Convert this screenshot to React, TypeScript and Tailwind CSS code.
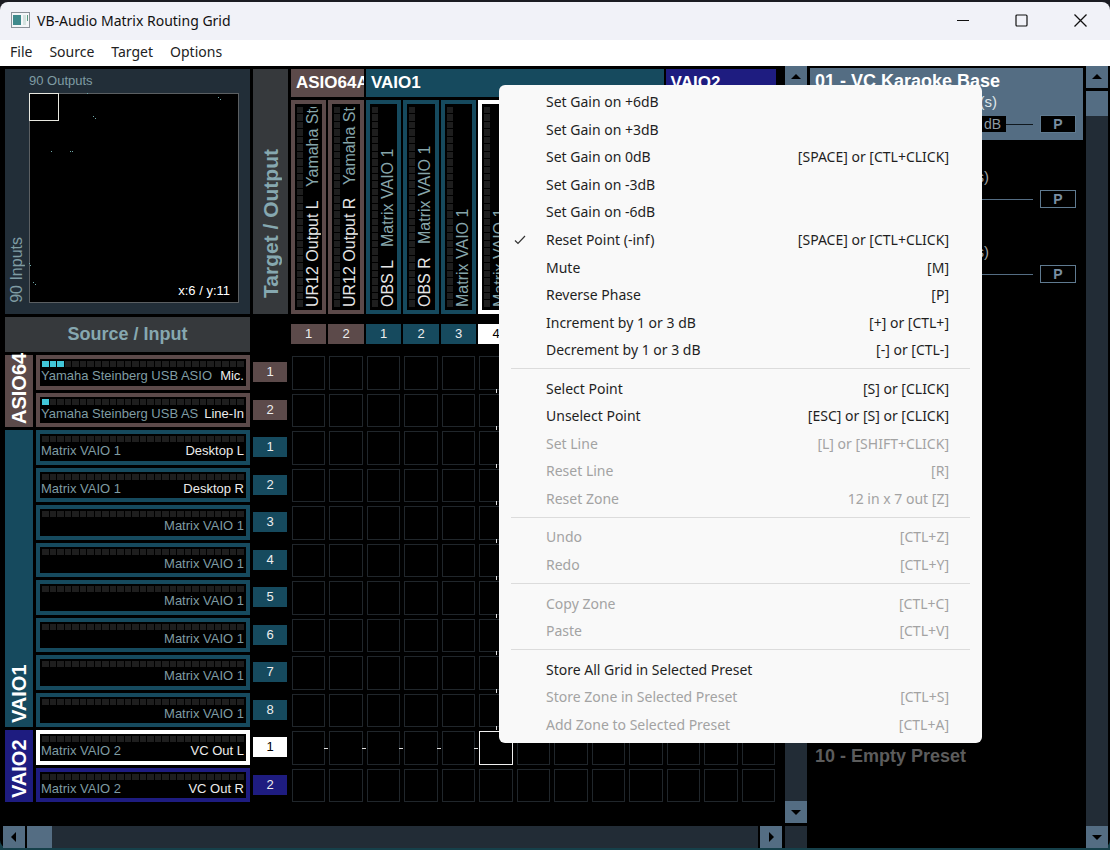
import clsx from 'clsx'

type Tone = 'asio' | 'vaio1' | 'vaio2' | 'active'

type Channel = {
  number: number
  tone: Tone
  device?: string
  name?: string
  level?: number
}

type MenuEntry = {
  label: string
  shortcut?: string
  checked?: boolean
  disabled?: boolean
}

type Preset = {
  slot: number
  title?: string
  zone?: string
  gain?: string
  selected?: boolean
}

const toneBg: Record<Tone, string> = {
  asio: 'bg-[#5c4a4a]',
  vaio1: 'bg-[#164a5e]',
  vaio2: 'bg-[#1e1c80]',
  active: 'bg-white',
}

const toneBorder: Record<Tone, string> = {
  asio: 'border-[#5c4a4a]',
  vaio1: 'border-[#164a5e]',
  vaio2: 'border-[#1e1c80]',
  active: 'border-white',
}

const outputs: Channel[] = [
  { number: 1, tone: 'asio', device: 'Yamaha Ste', name: 'UR12 Output L' },
  { number: 2, tone: 'asio', device: 'Yamaha Ste', name: 'UR12 Output R' },
  { number: 1, tone: 'vaio1', device: 'Matrix VAIO 1', name: 'OBS L' },
  { number: 2, tone: 'vaio1', device: 'Matrix VAIO 1', name: 'OBS R' },
  { number: 3, tone: 'vaio1', device: 'Matrix VAIO 1' },
  { number: 4, tone: 'active', device: 'Matrix VAIO 1' },
  { number: 5, tone: 'vaio1' },
  { number: 6, tone: 'vaio1' },
  { number: 7, tone: 'vaio1' },
  { number: 8, tone: 'vaio1' },
  { number: 1, tone: 'vaio2' },
  { number: 2, tone: 'vaio2' },
  { number: 3, tone: 'vaio2' },
]

const inputs: Channel[] = [
  { number: 1, tone: 'asio', device: 'Yamaha Steinberg USB ASIO', name: 'Mic.', level: 3 },
  { number: 2, tone: 'asio', device: 'Yamaha Steinberg USB AS', name: 'Line-In', level: 1 },
  { number: 1, tone: 'vaio1', device: 'Matrix VAIO 1', name: 'Desktop L' },
  { number: 2, tone: 'vaio1', device: 'Matrix VAIO 1', name: 'Desktop R' },
  { number: 3, tone: 'vaio1', device: 'Matrix VAIO 1' },
  { number: 4, tone: 'vaio1', device: 'Matrix VAIO 1' },
  { number: 5, tone: 'vaio1', device: 'Matrix VAIO 1' },
  { number: 6, tone: 'vaio1', device: 'Matrix VAIO 1' },
  { number: 7, tone: 'vaio1', device: 'Matrix VAIO 1' },
  { number: 8, tone: 'vaio1', device: 'Matrix VAIO 1' },
  { number: 1, tone: 'active', device: 'Matrix VAIO 2', name: 'VC Out L' },
  { number: 2, tone: 'vaio2', device: 'Matrix VAIO 2', name: 'VC Out R' },
]

const selectedRow = 10
const selectedColumn = 5

const menuGroups: MenuEntry[][] = [
  [
    { label: 'Set Gain on +6dB' },
    { label: 'Set Gain on +3dB' },
    { label: 'Set Gain on 0dB', shortcut: '[SPACE] or [CTL+CLICK]' },
    { label: 'Set Gain on -3dB' },
    { label: 'Set Gain on -6dB' },
    { label: 'Reset Point (-inf)', shortcut: '[SPACE] or [CTL+CLICK]', checked: true },
    { label: 'Mute', shortcut: '[M]' },
    { label: 'Reverse Phase', shortcut: '[P]' },
    { label: 'Increment by 1 or 3 dB', shortcut: '[+] or [CTL+]' },
    { label: 'Decrement by 1 or 3 dB', shortcut: '[-] or [CTL-]' },
  ],
  [
    { label: 'Select Point', shortcut: '[S] or [CLICK]' },
    { label: 'Unselect Point', shortcut: '[ESC] or [S] or [CLICK]' },
    { label: 'Set Line', shortcut: '[L] or [SHIFT+CLICK]', disabled: true },
    { label: 'Reset Line', shortcut: '[R]', disabled: true },
    { label: 'Reset Zone', shortcut: '12 in x 7 out [Z]', disabled: true },
  ],
  [
    { label: 'Undo', shortcut: '[CTL+Z]', disabled: true },
    { label: 'Redo', shortcut: '[CTL+Y]', disabled: true },
  ],
  [
    { label: 'Copy Zone', shortcut: '[CTL+C]', disabled: true },
    { label: 'Paste', shortcut: '[CTL+V]', disabled: true },
  ],
  [
    { label: 'Store All Grid in Selected Preset' },
    { label: 'Store Zone in Selected Preset', shortcut: '[CTL+S]', disabled: true },
    { label: 'Add Zone to Selected Preset', shortcut: '[CTL+A]', disabled: true },
  ],
]

const presets: Preset[] = [
  { slot: 1, title: '01 - VC Karaoke Base', zone: '(s)', gain: 'dB', selected: true },
  { slot: 2, zone: '(s)' },
  { slot: 3, zone: '(s)' },
  { slot: 4 },
  { slot: 5 },
  { slot: 6 },
  { slot: 7 },
  { slot: 8 },
  { slot: 9 },
  { slot: 10, title: '10 - Empty Preset' },
]

// Routed points on the overview map
const mapPoints = [
  [58, 0], [64, 23], [66, 25], [22, 58], [41, 58], [43, 58],
  [189, 4], [191, 6], [0, 170], [1, 172], [4, 189], [6, 191],
]

function TitleBar() {
  return (
    <header className="flex h-[38px] shrink-0 items-center rounded-t-lg bg-[#f1f2f8] pb-[2px] pl-[11px]">
      <svg width="19" height="16" viewBox="0 0 19 16" aria-hidden="true">
        <rect x="0.5" y="0.5" width="18" height="15" fill="#f4f6f8" stroke="#8b9299" />
        <rect x="2" y="3" width="8" height="10" fill="#3f8a8c" />
        <rect x="12" y="3" width="3" height="10" fill="#d5e3e0" />
        <rect x="16" y="3" width="1" height="6" fill="#5a9a80" />
      </svg>
      <h1 className="ml-[7px] flex-1 font-['Noto_Sans','Open_Sans',sans-serif] text-[14px] text-[#111]">
        VB-Audio Matrix Routing Grid
      </h1>
      <div className="flex h-full">
        <button aria-label="Minimize" className="flex w-[58px] items-center justify-center">
          <svg width="13" height="13" fill="none" stroke="#111"><path d="M0 6.5h12" /></svg>
        </button>
        <button aria-label="Maximize" className="flex w-[58px] items-center justify-center">
          <svg width="13" height="13" fill="none" stroke="#111" strokeWidth="1.2"><rect x="1" y="1" width="11" height="11" rx="1" /></svg>
        </button>
        <button aria-label="Close" className="flex w-[60px] items-center justify-center">
          <svg width="13" height="13" fill="none" stroke="#111" strokeWidth="1.3"><path d="M.5.5l12 12M12.5.5l-12 12" /></svg>
        </button>
      </div>
    </header>
  )
}

function MenuBar() {
  return (
    <nav className="flex h-[26px] shrink-0 items-center gap-[17px] bg-white px-[10px] pb-[3px] font-['Noto_Sans','Open_Sans',sans-serif] text-[14px] text-[#222]">
      {['File', 'Source', 'Target', 'Options'].map((item) => (
        <button key={item}>{item}</button>
      ))}
    </nav>
  )
}

function Leds({ lit = 0, vertical }: { lit?: number; vertical?: boolean }) {
  return (
    <div className={clsx('flex gap-px', vertical ? 'w-[6px] flex-col' : 'h-[6px]')}>
      {Array.from({ length: 27 }, (_, i) => (
        <span key={i} className={clsx('flex-1', i < lit ? 'bg-[#41c6d8]' : 'bg-[#1e1e1e]')} />
      ))}
    </div>
  )
}

function Overview() {
  return (
    <section className="flex bg-[#222e38] pr-[11px] pb-[11px]">
      <div className="flex w-6 items-end">
        <span className="rotate-180 text-[16px] leading-6 text-[#7f9ca3] [writing-mode:vertical-rl]">90 Inputs</span>
      </div>
      <div className="flex flex-1 flex-col">
        <span className="text-[13px] leading-6 text-[#7f9ca3]">90 Outputs</span>
        <div className="relative flex flex-1 items-end justify-end border border-[#5b5f62] bg-black px-2 py-[2px]">
          <svg className="absolute -top-px -left-px" width="210" height="210" shapeRendering="crispEdges" aria-hidden="true">
            {mapPoints.map(([x, y]) => (
              <rect key={`${x}-${y}`} x={x} y={y} width="1" height="1" fill="#6fa8a8" />
            ))}
            <rect x="0.5" y="0.5" width="29" height="27" fill="none" stroke="#e8e8e0" />
          </svg>
          <span className="text-[13px] leading-[18px] text-white">x:6 / y:11</span>
        </div>
      </div>
    </section>
  )
}

function OutputStrip({ channel }: { channel: Channel }) {
  return (
    <div className={clsx('flex min-w-0 gap-px overflow-hidden border-4 bg-black py-[3px] pl-[2px]', toneBorder[channel.tone])}>
      <Leds vertical />
      <div className="flex h-[200px] rotate-180 gap-[13px] overflow-hidden text-[16px] leading-[18px] whitespace-nowrap [writing-mode:vertical-rl]">
        {channel.name && <span className="text-[#e6e6e6]">{channel.name}</span>}
        {channel.device && <span className="text-[#86a5aa]">{channel.device}</span>}
      </div>
    </div>
  )
}

function InputStrip({ channel }: { channel: Channel }) {
  return (
    <div className={clsx('flex min-w-0 flex-col border-4 bg-black', toneBorder[channel.tone])}>
      <div className="px-[2px] pt-[2px]">
        <Leds lit={channel.level} />
      </div>
      <div
        className={clsx(
          'flex pr-[2px] pl-px text-[13px] leading-[18px] whitespace-nowrap',
          channel.name ? 'justify-between' : 'justify-end',
        )}
      >
        <span className="text-[#7f9ca3]">{channel.device}</span>
        {channel.name && <span className="text-[#ececec]">{channel.name}</span>}
      </div>
    </div>
  )
}

function ChannelNumber({ channel }: { channel: Channel }) {
  return (
    <button
      className={clsx('h-5 w-full text-[13px] leading-5', toneBg[channel.tone], channel.tone === 'active' ? 'text-black' : 'text-[#eee]')}
    >
      {channel.number}
    </button>
  )
}

function MatrixCells() {
  return (
    <div className="grid grid-cols-13 grid-rows-12 gap-x-[2px] gap-y-[3px]">
      {inputs.map((_, row) =>
        outputs.map((_, column) => {
          const selected = row === selectedRow && column === selectedColumn
          return (
            <button
              key={`${row}-${column}`}
              aria-label={`Input ${row + 1} to output ${column + 1}`}
              className={clsx('relative mx-px mt-px border', selected ? 'border-[#f0f0f0]' : 'border-[#20262b]')}
            >
              {row === selectedRow && column < selectedColumn && (
                <span className="absolute top-1/2 left-full h-px w-1 bg-[#ddd]" />
              )}
              {column === selectedColumn && row < selectedRow && (
                <span className="absolute top-full left-1/2 h-1 w-px bg-[#ddd]" />
              )}
            </button>
          )
        }),
      )}
    </div>
  )
}

function Matrix() {
  return (
    <div className="grid min-h-0 flex-1 grid-cols-[245px_35px_minmax(0,1fr)] grid-rows-[245px_35px_minmax(0,1fr)] gap-[3px] pt-[3px] pr-[6px] pb-6 pl-[2px]">
      <Overview />
      <div className="flex items-end justify-center bg-[#36393c] pb-4">
        <h2 className="rotate-180 text-[21px] leading-[35px] font-bold text-[#86a8b0] [writing-mode:vertical-rl]">Target / Output</h2>
      </div>
      <div className="grid grid-cols-13 grid-rows-[28px_minmax(0,1fr)] gap-x-[2px] gap-y-[3px] text-[17px] leading-[27px] font-bold text-white">
        <h3 className="col-span-2 overflow-hidden bg-[#5c4a4a] pl-[5px]">ASIO64A</h3>
        <h3 className="col-span-8 bg-[#164a5e] pl-[5px]">VAIO1</h3>
        <h3 className="col-span-3 bg-[#1e1c80] pl-[5px]">VAIO2</h3>
        <div className="col-span-13 grid grid-cols-13 gap-x-[2px] font-normal">
          {outputs.map((channel, i) => (
            <OutputStrip key={i} channel={channel} />
          ))}
        </div>
      </div>

      <h2 className="bg-[#36393c] text-center text-[18px] leading-[34px] font-bold text-[#86a8b0]">Source / Input</h2>
      <div />
      <div className="grid grid-cols-13 gap-x-[2px] pt-[7px]">
        {outputs.map((channel, i) => (
          <ChannelNumber key={i} channel={channel} />
        ))}
      </div>

      <div className="flex min-h-0 gap-[3px]">
        <div className="grid w-7 grid-rows-12 gap-y-[3px] text-[20px] leading-7 font-bold text-white">
          <h3 className="row-span-2 rotate-180 bg-[#5c4a4a] pt-[3px] [writing-mode:vertical-rl]">ASIO64</h3>
          <h3 className="row-span-8 rotate-180 bg-[#164a5e] pt-1 [writing-mode:vertical-rl]">VAIO1</h3>
          <h3 className="row-span-2 rotate-180 bg-[#1e1c80] pt-1 [writing-mode:vertical-rl]">VAIO2</h3>
        </div>
        <div className="grid min-w-0 flex-1 grid-rows-12 gap-y-[3px]">
          {inputs.map((channel, i) => (
            <InputStrip key={i} channel={channel} />
          ))}
        </div>
      </div>
      <div className="grid min-h-0 grid-rows-12 items-center gap-y-[3px] pr-px">
        {inputs.map((channel, i) => (
          <ChannelNumber key={i} channel={channel} />
        ))}
      </div>
      <MatrixCells />
    </div>
  )
}

function ArrowButton({ label, points }: { label: string; points: string }) {
  return (
    <button aria-label={label} className="flex size-[22px] shrink-0 items-center justify-center bg-[#546d83]">
      <svg width="12" height="12" fill="#000"><polygon points={points} /></svg>
    </button>
  )
}

const arrows = {
  up: '1,8 6,3 11,8',
  down: '1,4 6,9 11,4',
  left: '8,1 3,6 8,11',
  right: '4,1 9,6 4,11',
}

function PresetItem({ preset }: { preset: Preset }) {
  return (
    <li className={clsx('h-[72px] px-[5px]', preset.selected && 'bg-[#546d83]')}>
      <h3 className={clsx('h-[26px] text-[18px] leading-[26px] font-bold', preset.zone ? 'text-white' : 'text-[#5c5c5c]')}>
        {preset.title}
      </h3>
      {preset.zone && (
        <>
          <p className={clsx('text-right text-[15px] leading-4', preset.selected ? 'w-[182px] text-[#dfe6ea]' : 'w-[174px] text-[#a0a0a0]')}>
            {preset.zone}
          </p>
          <div className="mt-[5px] flex items-center pr-[2px]">
            {preset.gain && (
              <span className="ml-[132px] w-[59px] bg-black pr-[5px] text-right text-[14px] leading-4 text-[#8e9aa3]">{preset.gain}</span>
            )}
            <span className={clsx('mr-[7px] h-px flex-1', preset.selected ? 'bg-[#10181e]' : 'bg-[#546d83]')} />
            <button className="h-[18px] w-9 border border-[#5f7a90] bg-black text-[14px] leading-4 font-bold text-[#7a8fa3]">P</button>
          </div>
        </>
      )}
    </li>
  )
}

function ContextMenu() {
  return (
    <div
      role="menu"
      className="absolute top-[85px] left-[499px] flex h-[658px] w-[483px] flex-col rounded-md bg-[#f9f9f9] pt-[3px] pb-[5px] font-['Noto_Sans','Open_Sans',sans-serif] text-[14px]"
    >
      {menuGroups.map((group, i) => (
        <div key={i} className="contents">
          {i > 0 && <hr className="mx-3 my-[5px] border-[#dcdcdc]" />}
          {group.map((entry) => (
            <button
              key={entry.label}
              role="menuitem"
              disabled={entry.disabled}
              className={clsx('flex min-h-0 flex-1 items-center pr-[33px] pl-[15px]', entry.disabled ? 'text-[#a3a3a3]' : 'text-[#1f1f1f]')}
            >
              <span className="w-8 text-left">
                {entry.checked && (
                  <svg width="12" height="10" fill="none" stroke="#333" strokeWidth="1.2"><path d="M1 5.5l3 3 7-7.5" /></svg>
                )}
              </span>
              <span className="flex-1 text-left">{entry.label}</span>
              {entry.shortcut && <span>{entry.shortcut}</span>}
            </button>
          ))}
        </div>
      ))}
    </div>
  )
}

export default function App() {
  return (
    <div className="relative flex h-screen flex-col overflow-hidden bg-[#1b1c22] pt-[2px] font-['Liberation_Sans',Arial,sans-serif]">
      <TitleBar />
      <MenuBar />
      <div className="flex min-h-0 flex-1 bg-[#16404a] pb-[2px]">
        <main className="flex min-w-0 flex-1 gap-[3px] rounded-b-lg bg-black pr-[2px] pl-[3px]">
          <div className="flex min-w-0 flex-1 flex-col">
            <Matrix />
            <div className="flex h-[22px] gap-[2px]">
              <ArrowButton label="Scroll left" points={arrows.left} />
              <div className="flex flex-1 bg-[#222c36]">
                <div className="w-[25px] bg-[#546d83]" />
              </div>
              <ArrowButton label="Scroll right" points={arrows.right} />
            </div>
          </div>
          <div className="flex w-[22px] flex-col bg-[#222c36]">
            <ArrowButton label="Scroll matrix up" points={arrows.up} />
            <div className="flex-1" />
            <ArrowButton label="Scroll matrix down" points={arrows.down} />
            <div className="mb-[22px] h-[3px] bg-black" />
          </div>
          <ul className="flex w-[273px] flex-col gap-[3px] overflow-hidden pt-[2px]">
            {presets.map((preset) => (
              <PresetItem key={preset.slot} preset={preset} />
            ))}
          </ul>
          <div className="flex w-[22px] flex-col bg-[#222c36]">
            <ArrowButton label="Scroll presets up" points={arrows.up} />
            <div className="h-[3px] bg-black" />
            <div className="h-[25px] bg-[#546d83]" />
            <div className="flex-1" />
            <ArrowButton label="Scroll presets down" points={arrows.down} />
          </div>
        </main>
      </div>
      <ContextMenu />
    </div>
  )
}
